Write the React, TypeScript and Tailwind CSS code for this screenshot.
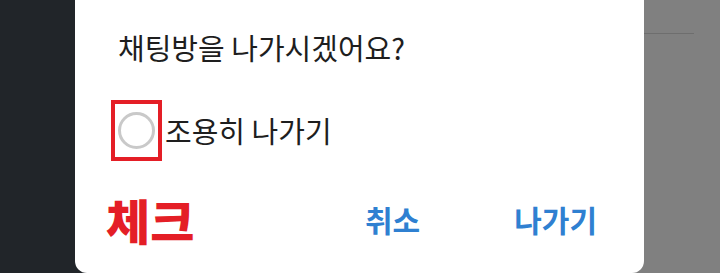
import React from "react";

export default function App() {
  const font = { fontFamily: '"Noto Sans CJK KR", "Noto Sans", sans-serif' };
  return (
    <div
      className="flex h-[273px] w-[720px] overflow-hidden bg-[linear-gradient(to_right,#212529_50%,#808080_50%)]"
      style={font}
    >
      <div className="w-[75px] shrink-0" />
      <div className="flex w-[569px] shrink-0 flex-col rounded-b-[12px] bg-white pt-[31px]">
        <div className="h-[33px] pl-[43px] text-[29px] leading-[33px] text-[#1e1e1e]">
          채팅방을 나가시겠어요?
        </div>
        <div className="mt-[46px] flex h-[40px] items-center pl-[43px]">
          <div className="relative h-[37px] w-[37px] shrink-0">
            <div className="h-[37px] w-[37px] rounded-full border-[3px] border-[#c9c9c9]" />
            <div className="absolute left-[-7px] top-[-12px] h-[61px] w-[51px] border-[4px] border-[#e41e26]" />
          </div>
          <div className="ml-[10px] text-[29px] leading-[40px] text-[#1e1e1e]">조용히 나가기</div>
        </div>
        <div className="mt-[44px] flex h-[50px] items-center pl-[31px] pr-[47px]">
          <div className="text-[48px] font-black leading-[50px] text-[#e41e26]">체크</div>
          <div className="ml-auto text-[30px] font-bold leading-[50px] text-[#2f80d1]">취소</div>
          <div className="ml-[94px] text-[30px] font-bold leading-[50px] text-[#2f80d1]">나가기</div>
        </div>
      </div>
      <div className="flex-1 pt-[33px]">
        <div className="h-px w-[50px] bg-[#6e6e6e]" />
      </div>
    </div>
  );
}
